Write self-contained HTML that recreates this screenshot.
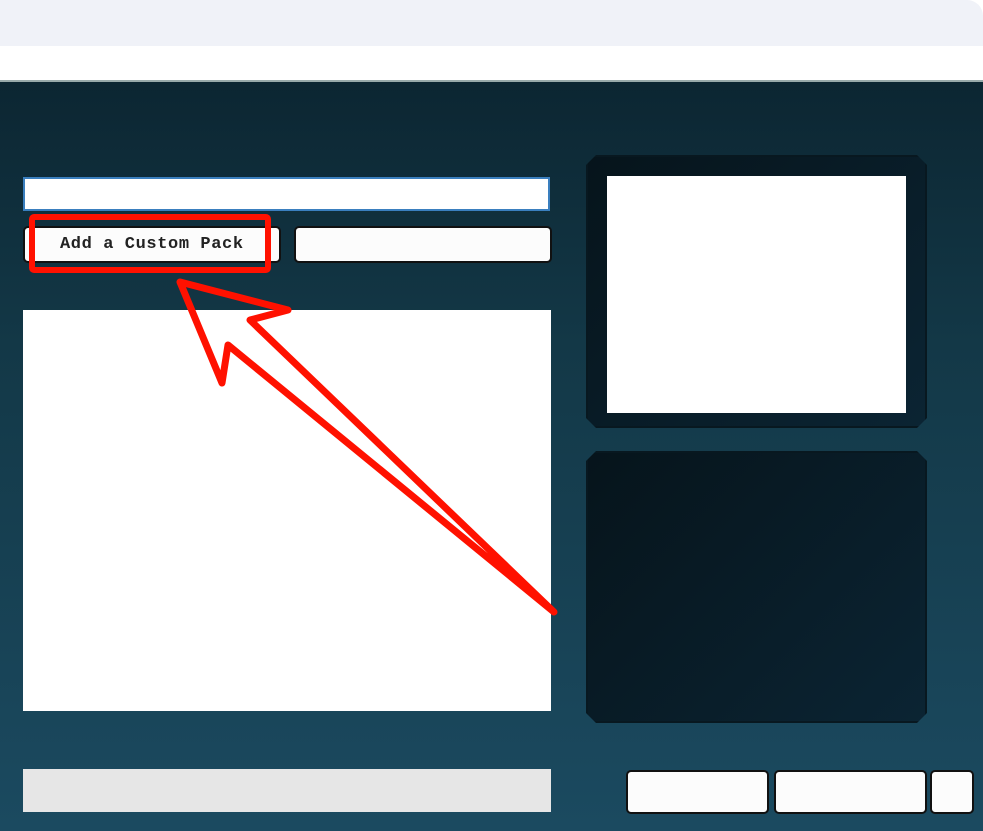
<!DOCTYPE html>
<html><head><meta charset="utf-8"><style>
*{margin:0;padding:0;box-sizing:border-box}
body{width:983px;height:831px;overflow:hidden;background:#fff;position:relative;font-family:"Liberation Mono",monospace}
.top{position:absolute;left:0;top:0;width:983px;height:46px;background:#f0f2f8;border-top-right-radius:16px}
.app{position:absolute;left:0;top:80px;width:983px;height:751px;background:linear-gradient(180deg,#0c2632 0%,#133847 35%,#1b4a60 100%);border-top:2px solid #9aa;}
.w{position:absolute;background:#fff}
.btn{position:absolute;background:#fcfcfc;border:2px solid #111;border-radius:5px}
.panel{position:absolute;background:linear-gradient(135deg,#06141b,#0b2433);border:2px solid #081820;clip-path:polygon(10px 0,calc(100% - 10px) 0,100% 10px,100% calc(100% - 10px),calc(100% - 10px) 100%,10px 100%,0 calc(100% - 10px),0 10px)}
</style></head><body>
<div class="top"></div>
<div class="app"></div>
<div class="w" style="left:23px;top:177px;width:527px;height:34px;border:2px solid #3a7fbf"></div>
<div class="btn" style="left:23px;top:226px;width:258px;height:37px"></div>
<div style="position:absolute;left:60px;top:235px;font-size:17px;line-height:20px;color:#222;letter-spacing:0.6px;font-weight:bold">Add a Custom Pack</div>
<div class="btn" style="left:294px;top:226px;width:258px;height:37px"></div>
<div class="w" style="left:23px;top:310px;width:528px;height:401px"></div>
<div style="position:absolute;left:23px;top:769px;width:528px;height:43px;background:#e6e6e6"></div>
<div class="panel" style="left:586px;top:155px;width:341px;height:273px"></div>
<div class="w" style="left:607px;top:176px;width:299px;height:237px"></div>
<div class="panel" style="left:586px;top:451px;width:341px;height:272px"></div>
<div class="btn" style="left:626px;top:770px;width:143px;height:44px"></div>
<div class="btn" style="left:774px;top:770px;width:153px;height:44px"></div>
<div class="btn" style="left:930px;top:770px;width:44px;height:44px"></div>
<svg style="position:absolute;left:0;top:0" width="983" height="831">
<rect x="32" y="217" width="236" height="53" fill="none" stroke="#ff1100" stroke-width="6" rx="2"/>
<polygon points="180,282 288,310 250,320 554,612 228,345 222,383" fill="none" stroke="#ff1100" stroke-width="7" stroke-linejoin="round"/>
</svg>
</body></html>
